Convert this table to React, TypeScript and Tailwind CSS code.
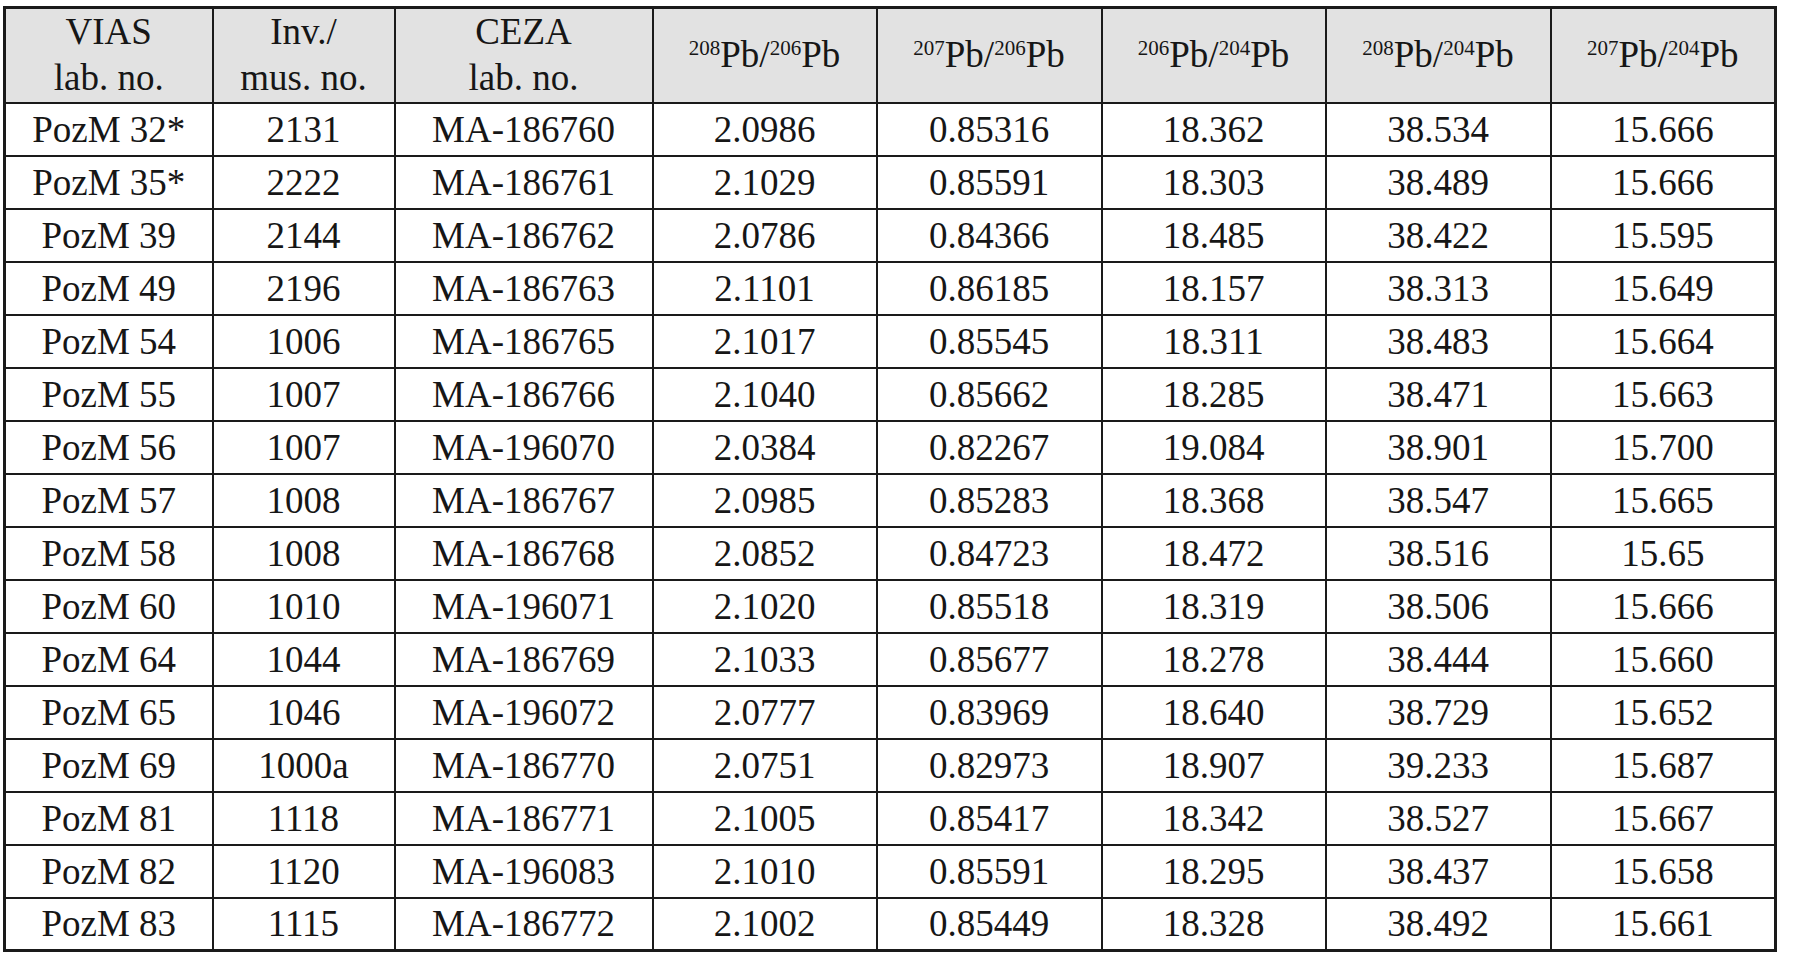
import React from "react";

const rows: string[][] = [
  ["PozM 32*", "2131", "MA-186760", "2.0986", "0.85316", "18.362", "38.534", "15.666"],
  ["PozM 35*", "2222", "MA-186761", "2.1029", "0.85591", "18.303", "38.489", "15.666"],
  ["PozM 39", "2144", "MA-186762", "2.0786", "0.84366", "18.485", "38.422", "15.595"],
  ["PozM 49", "2196", "MA-186763", "2.1101", "0.86185", "18.157", "38.313", "15.649"],
  ["PozM 54", "1006", "MA-186765", "2.1017", "0.85545", "18.311", "38.483", "15.664"],
  ["PozM 55", "1007", "MA-186766", "2.1040", "0.85662", "18.285", "38.471", "15.663"],
  ["PozM 56", "1007", "MA-196070", "2.0384", "0.82267", "19.084", "38.901", "15.700"],
  ["PozM 57", "1008", "MA-186767", "2.0985", "0.85283", "18.368", "38.547", "15.665"],
  ["PozM 58", "1008", "MA-186768", "2.0852", "0.84723", "18.472", "38.516", "15.65"],
  ["PozM 60", "1010", "MA-196071", "2.1020", "0.85518", "18.319", "38.506", "15.666"],
  ["PozM 64", "1044", "MA-186769", "2.1033", "0.85677", "18.278", "38.444", "15.660"],
  ["PozM 65", "1046", "MA-196072", "2.0777", "0.83969", "18.640", "38.729", "15.652"],
  ["PozM 69", "1000a", "MA-186770", "2.0751", "0.82973", "18.907", "39.233", "15.687"],
  ["PozM 81", "1118", "MA-186771", "2.1005", "0.85417", "18.342", "38.527", "15.667"],
  ["PozM 82", "1120", "MA-196083", "2.1010", "0.85591", "18.295", "38.437", "15.658"],
  ["PozM 83", "1115", "MA-186772", "2.1002", "0.85449", "18.328", "38.492", "15.661"],
];

function Ratio({ a, b }: { a: string; b: string }) {
  return (
    <span className="whitespace-nowrap">
      <span className="relative -top-[12px] text-[21px] leading-none">{a}</span>
      Pb/
      <span className="relative -top-[12px] text-[21px] leading-none">{b}</span>
      Pb
    </span>
  );
}

export default function App() {
  const th =
    "border-2 border-[#1a1a1a] bg-[#e2e2e2] font-normal text-center align-middle leading-[46px] p-0";
  const td =
    "border-2 border-[#1a1a1a] text-center align-middle h-[53px] p-0 leading-none";
  return (
    <div className="min-h-screen w-full bg-white pt-[6px] pl-[3px]">
      <table
        className="table-fixed border-collapse border-[3px] border-[#1a1a1a] text-[#161616] text-[37px] w-[1771px]"
        style={{ fontFamily: '"Liberation Serif", "Times New Roman", serif' }}
      >
        <colgroup>
          <col className="w-[208px]" />
          <col className="w-[182px]" />
          <col className="w-[258px]" />
          <col className="w-[224px]" />
          <col className="w-[225px]" />
          <col className="w-[224px]" />
          <col className="w-[225px]" />
          <col className="w-[225px]" />
        </colgroup>
        <thead>
          <tr className="h-[95px]">
            <th className={th}>
              VIAS
              <br />
              lab. no.
            </th>
            <th className={th}>
              Inv./
              <br />
              mus. no.
            </th>
            <th className={th}>
              CEZA
              <br />
              lab. no.
            </th>
            <th className={th}>
              <Ratio a="208" b="206" />
            </th>
            <th className={th}>
              <Ratio a="207" b="206" />
            </th>
            <th className={th}>
              <Ratio a="206" b="204" />
            </th>
            <th className={th}>
              <Ratio a="208" b="204" />
            </th>
            <th className={th}>
              <Ratio a="207" b="204" />
            </th>
          </tr>
        </thead>
        <tbody>
          {rows.map((r, i) => (
            <tr key={i}>
              {r.map((c, j) => (
                <td key={j} className={td}>
                  {c}
                </td>
              ))}
            </tr>
          ))}
        </tbody>
      </table>
    </div>
  );
}
